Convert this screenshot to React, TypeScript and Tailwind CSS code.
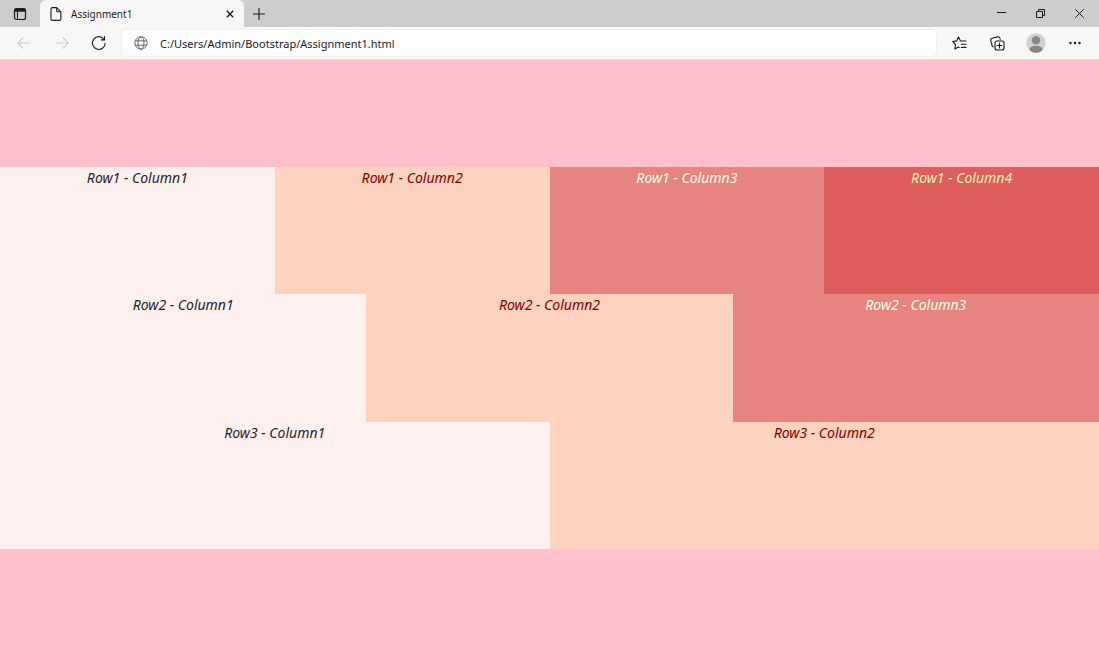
import type { ReactNode } from "react";

type Cell = { label: string; style: string };

const rows: Cell[][] = [
  [
    { label: "Row1 - Column1", style: "bg-[#fff0f0] text-[#212529]" },
    { label: "Row1 - Column2", style: "bg-[#fdd2be] text-[#800000]" },
    { label: "Row1 - Column3", style: "bg-[#e8847f] text-[#f0ffe8]" },
    { label: "Row1 - Column4", style: "bg-[#de5d5d] text-[#e8f5b0]" },
  ],
  [
    { label: "Row2 - Column1", style: "bg-[#fff0f0] text-[#212529]" },
    { label: "Row2 - Column2", style: "bg-[#fdd2be] text-[#800000]" },
    { label: "Row2 - Column3", style: "bg-[#e8847f] text-[#f0ffe8]" },
  ],
  [
    { label: "Row3 - Column1", style: "bg-[#fff0f0] text-[#212529]" },
    { label: "Row3 - Column2", style: "bg-[#fdd2be] text-[#800000]" },
  ],
];

function IconButton({ label, disabled, className = "", children }: { label: string; disabled?: boolean; className?: string; children: ReactNode }) {
  return (
    <button type="button" aria-label={label} disabled={disabled} className={`flex shrink-0 items-center justify-center ${className}`}>
      {children}
    </button>
  );
}

function TabStrip() {
  return (
    <div className="flex h-[27px] bg-[#cdcdcd] text-[#1b1b1b]">
      <IconButton label="Tab actions" className="w-10">
        <svg width="14" height="14" viewBox="0 0 14 14" fill="none" stroke="currentColor">
          <rect x="1.5" y="1.5" width="11" height="11" rx="2" strokeWidth="1.2" />
          <path d="M1.5 3.2h11" strokeWidth="3" />
          <path d="M4.5 4v8.5" strokeWidth="1" />
        </svg>
      </IconButton>
      <div className="flex w-[204px] items-center rounded-t-md bg-[#f7f7f7] pl-2.5">
        <svg width="12" height="14" viewBox="0 0 12 14" fill="none" stroke="currentColor" strokeWidth="1.1" strokeLinejoin="round">
          <path d="M2.5.6h4.2l4.2 4.2v7.1a1.5 1.5 0 0 1-1.5 1.5h-6.9A1.5 1.5 0 0 1 1 11.9V2.1A1.5 1.5 0 0 1 2.5.6z" />
          <path d="M6.7.8v3.1a.9.9 0 0 0 .9.9h3.1" />
        </svg>
        <span className="ml-[9px] flex-1 text-[10px] leading-4">Assignment1</span>
        <IconButton label="Close tab" className="w-7 self-stretch">
          <svg width="8" height="8" viewBox="0 0 8 8" stroke="currentColor" strokeWidth="1.4">
            <path d="M.8.8l6.4 6.4M7.2.8L.8 7.2" />
          </svg>
        </IconButton>
      </div>
      <IconButton label="New tab" className="w-[30px]">
        <svg width="12" height="12" viewBox="0 0 12 12" stroke="currentColor" strokeWidth="1.1">
          <path d="M6 0v12M0 6h12" />
        </svg>
      </IconButton>
      <div className="ml-auto flex">
        <IconButton label="Minimize" className="w-[39px]">
          <svg width="9" height="9" viewBox="0 0 9 9" stroke="currentColor">
            <path d="M0 3.5h9" />
          </svg>
        </IconButton>
        <IconButton label="Restore" className="w-[39px]">
          <svg width="9" height="9" viewBox="0 0 9 9" fill="none" stroke="currentColor">
            <path d="M.5 2.5h6v6h-6zM2.5 2.5v-2h6v6h-2" />
          </svg>
        </IconButton>
        <IconButton label="Close window" className="w-[39px]">
          <svg width="9" height="9" viewBox="0 0 9 9" stroke="currentColor">
            <path d="M.3.3l8.4 8.4M8.7.3L.3 8.7" />
          </svg>
        </IconButton>
      </div>
    </div>
  );
}

function Toolbar() {
  return (
    <div className="flex h-[33px] items-center border-b border-[#dedede] bg-[#f7f7f7] px-[5px] text-[#1b1b1b]">
      <IconButton label="Back" disabled className="h-7 w-[38px] text-[#cecece]">
        <svg width="14" height="12" viewBox="0 0 14 12" fill="none" stroke="currentColor" strokeWidth="1.1">
          <path d="M6.2.5L.8 6l5.4 5.5M.8 6h12.7" />
        </svg>
      </IconButton>
      <IconButton label="Forward" disabled className="h-7 w-[37px] text-[#cecece]">
        <svg width="14" height="12" viewBox="0 0 14 12" fill="none" stroke="currentColor" strokeWidth="1.1">
          <path d="M7.8.5L13.2 6l-5.4 5.5M13.2 6H.5" />
        </svg>
      </IconButton>
      <IconButton label="Refresh" className="h-7 w-[38px]">
        <svg width="16" height="16" viewBox="0 0 16 16" fill="none" stroke="currentColor" strokeWidth="1.1">
          <path d="M13.2 4.6A6.4 6.4 0 1 0 14.2 8" />
          <path d="M13.5 1.3v3.6H9.9" />
        </svg>
      </IconButton>
      <div className="ml-1 flex h-[26px] min-w-0 flex-1 items-center rounded bg-white pl-3 shadow-[0_0_2px_rgba(0,0,0,0.12)]">
        <svg width="14" height="14" viewBox="0 0 14 14" fill="none" stroke="#666666" strokeWidth="1">
          <circle cx="7" cy="7" r="6.2" />
          <ellipse cx="7" cy="7" rx="3" ry="6.2" />
          <path d="M1.3 4.8h11.4M1.3 9.2h11.4" />
        </svg>
        <input
          type="text"
          aria-label="Address"
          defaultValue="C:/Users/Admin/Bootstrap/Assignment1.html"
          className="ml-3 h-full min-w-0 flex-1 bg-transparent text-[11px] outline-none"
        />
      </div>
      <div className="ml-1 flex">
        <IconButton label="Favorites" className="h-7 w-[38px]">
          <svg width="15" height="14" viewBox="0 0 15 14" fill="none" stroke="currentColor" strokeWidth="1.1" strokeLinejoin="round" strokeLinecap="round">
            <path d="M14 5H8.5L6.4.9 4.6 4.9.7 5.5l2.9 3-.7 4.4 3.5-1.9.9.4M9.3 8.2H14M9.3 11.4H14" />
          </svg>
        </IconButton>
        <IconButton label="Collections" className="h-7 w-[38px]">
          <svg width="15" height="15" viewBox="0 0 15 15" fill="none" stroke="currentColor" strokeWidth="1.1" strokeLinecap="round">
            <rect x="5" y="5" width="9" height="9" rx="2" />
            <path d="M9.5 7v5M7 9.500h5" />
            <path d="M3.300 10.800A2 2 0 0 1 2 9.300L.8 4.600a2 2 0 0 1 1.400-2.400L7.600.9A2 2 0 0 1 10 2.300l.3 1" />
          </svg>
        </IconButton>
        <IconButton label="Profile" className="h-7 w-10">
          <svg width="20" height="20" viewBox="0 0 20 20">
            <circle cx="10" cy="10" r="9.7" fill="#d2d0ce" />
            <circle cx="10" cy="7.3" r="4.2" fill="#898582" />
            <path d="M3.5 17.2c0-3 2.6-4.5 6.5-4.5s6.5 1.5 6.5 4.5a9.7 9.7 0 0 1-13 0z" fill="#898582" />
          </svg>
        </IconButton>
        <IconButton label="Settings and more" className="h-7 w-[38px]">
          <svg width="12" height="4" viewBox="0 0 12 4" fill="currentColor">
            <circle cx="1.5" cy="2" r="1.2" />
            <circle cx="6" cy="2" r="1.2" />
            <circle cx="10.5" cy="2" r="1.2" />
          </svg>
        </IconButton>
      </div>
    </div>
  );
}

export default function App() {
  return (
    <div className="flex min-h-screen flex-col bg-[#ffc0cb] font-['Noto_Sans',sans-serif]">
      <header>
        <TabStrip />
        <Toolbar />
      </header>
      <main className="pt-[107px]">
        <div className="grid h-[382px] grid-rows-3">
          {rows.map((row, index) => (
            <div key={index} className="flex">
              {row.map((cell) => (
                <div key={cell.label} className={`flex-1 text-center text-[14px] leading-[22px] italic ${cell.style}`}>
                  {cell.label}
                </div>
              ))}
            </div>
          ))}
        </div>
      </main>
    </div>
  );
}
